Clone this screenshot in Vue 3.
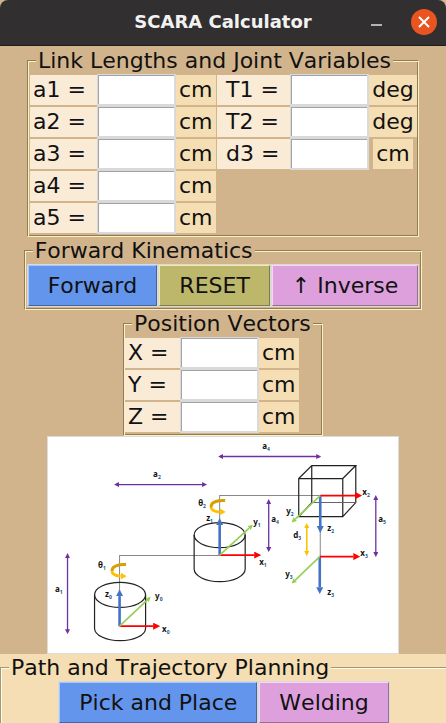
<script setup>
import { reactive } from 'vue'

const linkRows = [
  { id: 'a1', unit: 'cm', joint: 'T1', jointUnit: 'deg' },
  { id: 'a2', unit: 'cm', joint: 'T2', jointUnit: 'deg' },
  { id: 'a3', unit: 'cm', joint: 'd3', jointUnit: 'cm' },
  { id: 'a4', unit: 'cm' },
  { id: 'a5', unit: 'cm' },
]
const axes = ['X', 'Y', 'Z']

const values = reactive({ a1: '', a2: '', a3: '', a4: '', a5: '', T1: '', T2: '', d3: '', X: '', Y: '', Z: '' })

function reset() {
  for (const key of Object.keys(values)) values[key] = ''
}

const dimensions = [
  { x1: 117, y1: 484.5, x2: 206, y2: 484.5 },
  { x1: 221, y1: 456.5, x2: 320, y2: 456.5 },
  { x1: 68.5, y1: 555, x2: 68.5, y2: 632 },
  { x1: 269.5, y1: 501, x2: 269.5, y2: 550 },
  { x1: 376.5, y1: 497, x2: 376.5, y2: 555 },
]

const frames = [
  { x: 120.5, y: 626, red: [154, 626], blue: [120.5, 596], green: [148, 600] },
  { x: 220.5, y: 555, red: [255, 555], blue: [220.5, 525], green: [250, 528] },
  { x: 321, y: 495.5, red: [356, 495.5], blue: [321, 526], green: [296, 519] },
  { x: 320.5, y: 556.5, red: [354, 556.5], blue: [320.5, 587], green: [296, 580] },
]

const marks = [
  { t: 'a', s: '2', x: 154, y: 477 },
  { t: 'a', s: '4', x: 263, y: 449 },
  { t: 'a', s: '1', x: 56, y: 592 },
  { t: 'a', s: '4', x: 272, y: 522 },
  { t: 'a', s: '5', x: 379, y: 522 },
  { t: 'd', s: '3', x: 294, y: 538 },
  { t: 'θ', s: '1', x: 99, y: 568 },
  { t: 'θ', s: '2', x: 199, y: 506 },
  { t: 'z', s: '0', x: 106, y: 597 },
  { t: 'y', s: '0', x: 156, y: 599 },
  { t: 'x', s: '0', x: 163, y: 632 },
  { t: 'z', s: '1', x: 207, y: 521 },
  { t: 'y', s: '1', x: 254, y: 525 },
  { t: 'x', s: '1', x: 260, y: 565 },
  { t: 'y', s: '2', x: 287, y: 514 },
  { t: 'x', s: '2', x: 363, y: 495 },
  { t: 'z', s: '2', x: 328, y: 531 },
  { t: 'x', s: '3', x: 361, y: 556 },
  { t: 'y', s: '3', x: 286, y: 577 },
  { t: 'z', s: '3', x: 328, y: 595 },
]
</script>

<template>
  <div class="window">
    <header class="titlebar">
      <h1 class="title">SCARA Calculator</h1>
      <div class="controls">
        <button class="minimize" type="button" aria-label="Minimize"></button>
        <button class="close" type="button" aria-label="Close">
          <svg viewBox="0 0 26 26" width="26" height="26" aria-hidden="true">
            <circle cx="13" cy="13" r="13" fill="#e95420" />
            <path d="M8 8L18 18M18 8L8 18" stroke="#fff" stroke-width="2" />
          </svg>
        </button>
      </div>
    </header>

    <main class="body">
      <fieldset class="frame">
        <legend>Link Lengths and Joint Variables</legend>
        <div class="links">
          <template v-for="row in linkRows" :key="row.id">
            <label class="name" :for="row.id">{{ row.id }} =</label>
            <input :id="row.id" v-model="values[row.id]" class="entry" type="text" />
            <span class="unit">{{ row.unit }}</span>
            <template v-if="row.joint">
              <label class="name joint" :for="row.joint">{{ row.joint }} =</label>
              <input :id="row.joint" v-model="values[row.joint]" class="entry" type="text" />
              <span class="unit last">{{ row.jointUnit }}</span>
            </template>
          </template>
        </div>
      </fieldset>

      <fieldset class="frame">
        <legend>Forward Kinematics</legend>
        <div class="buttons">
          <button class="btn blue" type="button">Forward</button>
          <button class="btn khaki" type="button" @click="reset">RESET</button>
          <button class="btn plum" type="button">↑ Inverse</button>
        </div>
      </fieldset>

      <fieldset class="frame">
        <legend>Position Vectors</legend>
        <div class="vectors">
          <template v-for="axis in axes" :key="axis">
            <label class="name" :for="axis">{{ axis }} =</label>
            <input :id="axis" v-model="values[axis]" class="entry" type="text" />
            <span class="unit">cm</span>
          </template>
        </div>
      </fieldset>

      <svg class="diagram" viewBox="48 436 352 218" role="img" aria-label="SCARA kinematic diagram">
        <defs>
          <marker id="dim" viewBox="0 0 5 5" refX="3" refY="2.500" markerWidth="5" markerHeight="5" markerUnits="userSpaceOnUse" orient="auto-start-reverse">
            <path d="M0 0L5 2.500L0 5z" fill="#7030a0" />
          </marker>
          <marker id="gold" viewBox="0 0 5 5" refX="3" refY="2.500" markerWidth="5" markerHeight="5" markerUnits="userSpaceOnUse" orient="auto-start-reverse">
            <path d="M0 0L5 2.500L0 5z" fill="#ffc000" />
          </marker>
          <marker id="red" viewBox="0 0 7 7" refX="0" refY="3.500" markerWidth="7" markerHeight="7" markerUnits="userSpaceOnUse" orient="auto">
            <path d="M0 0L7 3.500L0 7z" fill="#ff0000" />
          </marker>
          <marker id="blue" viewBox="0 0 7 7" refX="0" refY="3.500" markerWidth="7" markerHeight="7" markerUnits="userSpaceOnUse" orient="auto">
            <path d="M0 0L7 3.500L0 7z" fill="#4472c4" />
          </marker>
          <marker id="green" viewBox="0 0 5 5" refX="0" refY="2.500" markerWidth="5" markerHeight="5" markerUnits="userSpaceOnUse" orient="auto">
            <path d="M0 0L5 2.500L0 5z" fill="#92d050" />
          </marker>
        </defs>

        <g fill="none" stroke="#888" stroke-width="1">
          <path d="M120.500 626V555.500H220.500" />
          <path d="M220.500 555V495.500H321V556" />
        </g>

        <g fill="none" stroke="#222" stroke-width="1.200">
          <ellipse cx="121" cy="594.700" rx="25.500" ry="12.500" />
          <path d="M95.500 594.700V628A25.500 12.500 0 0 0 146.500 628V594.700" />
          <ellipse cx="220.500" cy="535" rx="25.500" ry="12.500" />
          <path d="M195 535V569A25.500 12.500 0 0 0 246 569V535" />
          <path d="M299.500 478.500H343.500V516.500H299.500zM299.500 478.500L312.500 465.500H356.500L343.500 478.500M356.500 465.500V502.500L343.500 516.500M312.500 465.500V502.500L299.500 516.500" />
          <path d="M312.500 502.500H356.500" stroke="#666" stroke-width="1" />
        </g>

        <g stroke="#7030a0" stroke-width="1.300">
          <line v-for="(d, i) in dimensions" :key="i" v-bind="d" marker-start="url(#dim)" marker-end="url(#dim)" />
        </g>
        <line x1="307.500" y1="525" x2="307.500" y2="554" stroke="#ffc000" stroke-width="1.600" marker-start="url(#gold)" marker-end="url(#gold)" />

        <g v-for="(f, i) in frames" :key="i">
          <line :x1="f.x" :y1="f.y" :x2="f.blue[0]" :y2="f.blue[1]" stroke="#4472c4" stroke-width="2.600" marker-end="url(#blue)" />
          <line :x1="f.x" :y1="f.y" :x2="f.red[0]" :y2="f.red[1]" stroke="#ff0000" stroke-width="1.800" marker-end="url(#red)" />
          <line :x1="f.x" :y1="f.y" :x2="f.green[0]" :y2="f.green[1]" stroke="#92d050" stroke-width="1.600" marker-end="url(#green)" />
        </g>

        <g v-for="(p, i) in [[119.500, 570], [218.500, 506]]" :key="'r' + i" :transform="`translate(${p[0]} ${p[1]})`" fill="none">
          <path d="M-6.500 1C-6.500 4 -3 5.500 2 6" stroke="#ffc000" stroke-width="2.800" />
          <path d="M7.500 -5.500C0 -6 -7 -4 -6.500 1" stroke="#d6a000" stroke-width="3" />
          <path d="M2.500 2.500L8 6L2.500 9z" fill="#ffc000" />
        </g>

        <g class="marks">
          <text v-for="(m, i) in marks" :key="i" :x="m.x" :y="m.y">{{ m.t }}<tspan class="sub" dy="2">{{ m.s }}</tspan></text>
        </g>
      </svg>
    </main>

    <section class="planning">
      <fieldset class="frame wide">
        <legend>Path and Trajectory Planning</legend>
        <div class="buttons">
          <button class="btn blue" type="button">Pick and Place</button>
          <button class="btn plum" type="button">Welding</button>
        </div>
      </fieldset>
    </section>
  </div>
</template>

<style>
body {
  margin: 0;
  background: #f5deb3;
}
</style>

<style scoped>
.window {
  overflow: hidden;
  background: #d2b48c;
  color: #111;
  font-family: "DejaVu Sans", sans-serif;
  font-size: 22px;
  font-kerning: none;
  line-height: 27px;
}

.titlebar {
  display: grid;
  grid-template-columns: 1fr auto 1fr;
  align-items: center;
  box-sizing: border-box;
  height: 46px;
  padding: 0 9px 2px;
  border-bottom: 1px solid #1f1d1d;
  border-radius: 8px 8px 0 0;
  background: #322f30;
}

.title {
  grid-column: 2;
  margin: 0;
  color: #f2f2f2;
  font-size: 18px;
  font-weight: 700;
}

.controls {
  display: flex;
  justify-content: flex-end;
  align-items: center;
  gap: 27px;
}

.controls button {
  display: block;
  padding: 0;
  border: 0;
  background: none;
}

.controls .minimize {
  width: 16px;
  height: 20px;
}

.minimize::before {
  display: block;
  width: 11px;
  height: 2px;
  margin: 6px auto 0;
  background: #b5b3b3;
  content: "";
}

.close svg {
  display: block;
}

.body {
  display: flex;
  flex-direction: column;
  align-items: center;
  padding-top: 1px;
}

.frame {
  --face: #d2b48c;
  --shade: #8f7b5f;
  --light: #fff2b5;
  min-width: 0;
  margin: 0;
  padding: 0 1px 1px;
  border: 1px solid;
  border-color: var(--shade) var(--light) var(--light) var(--shade);
  box-shadow: inset 1px 1px 0 var(--light), inset -1px -1px 0 var(--shade);
}

.frame legend {
  margin-left: 7px;
  padding: 0 2px;
  background: var(--face);
}

.links,
.vectors {
  display: grid;
  grid-auto-rows: 32px;
  align-items: center;
  padding-bottom: 1px;
}

.links {
  grid-template-columns: 67px 79px 41px 73px 79px 48px;
  padding-left: 1px;
}

.vectors {
  grid-template-columns: 55px 79px 41px;
  padding-right: 21px;
}

.name,
.unit {
  box-sizing: border-box;
  height: 30px;
  line-height: 30px;
  white-space: pre;
}

.name {
  grid-column: 1;
  padding-left: 3px;
  background: #faebd7;
}

.name.joint {
  grid-column: 4;
  padding-left: 9px;
}

.unit {
  justify-self: start;
  padding: 0 3px;
  background: #f5deb3;
}

.unit.last {
  justify-self: center;
}

.entry {
  box-sizing: border-box;
  width: 100%;
  min-width: 0;
  height: 32px;
  padding: 0 2px;
  border: 1px solid #d9d9d9;
  border-right-width: 2px;
  border-bottom-width: 2px;
  border-radius: 0;
  outline: 0;
  background: #fff;
  box-shadow: inset 1px 1px 0 #a3a3a3;
  font: inherit;
}

.buttons {
  display: flex;
  justify-content: center;
  gap: 2px;
  padding: 1px 2px 2px;
}

.btn {
  box-sizing: border-box;
  height: 41px;
  padding: 0 19px;
  border: 1px solid;
  border-radius: 0;
  outline: 1px solid #d9d9d9;
  color: #111;
  font: inherit;
  font-kerning: none;
  white-space: nowrap;
}

.blue {
  border-color: #a5c6ff #45659f #45659f #a5c6ff;
  background: #6495ed;
}

.khaki {
  border-color: #f2eca0 #7f7c49 #7f7c49 #f2eca0;
  background: #bdb76b;
}

.plum {
  border-color: #f6d5f6 #966d96 #966d96 #f6d5f6;
  background: #dda0dd;
}

.diagram {
  box-sizing: border-box;
  display: block;
  width: 79%;
  height: auto;
  background: #fff;
  outline: 1px solid #dcdcdc;
  outline-offset: -1px;
}

.marks {
  fill: #111;
  font-family: "Noto Sans", sans-serif;
  font-size: 8px;
  font-weight: 700;
}

.sub {
  fill: #1f4e79;
  font-size: 5px;
}

.planning {
  background: #f5deb3;
}

.frame.wide {
  --face: #f5deb3;
  --shade: #a6977a;
  --light: #fffbe8;
  margin-right: -2px;
}
</style>
